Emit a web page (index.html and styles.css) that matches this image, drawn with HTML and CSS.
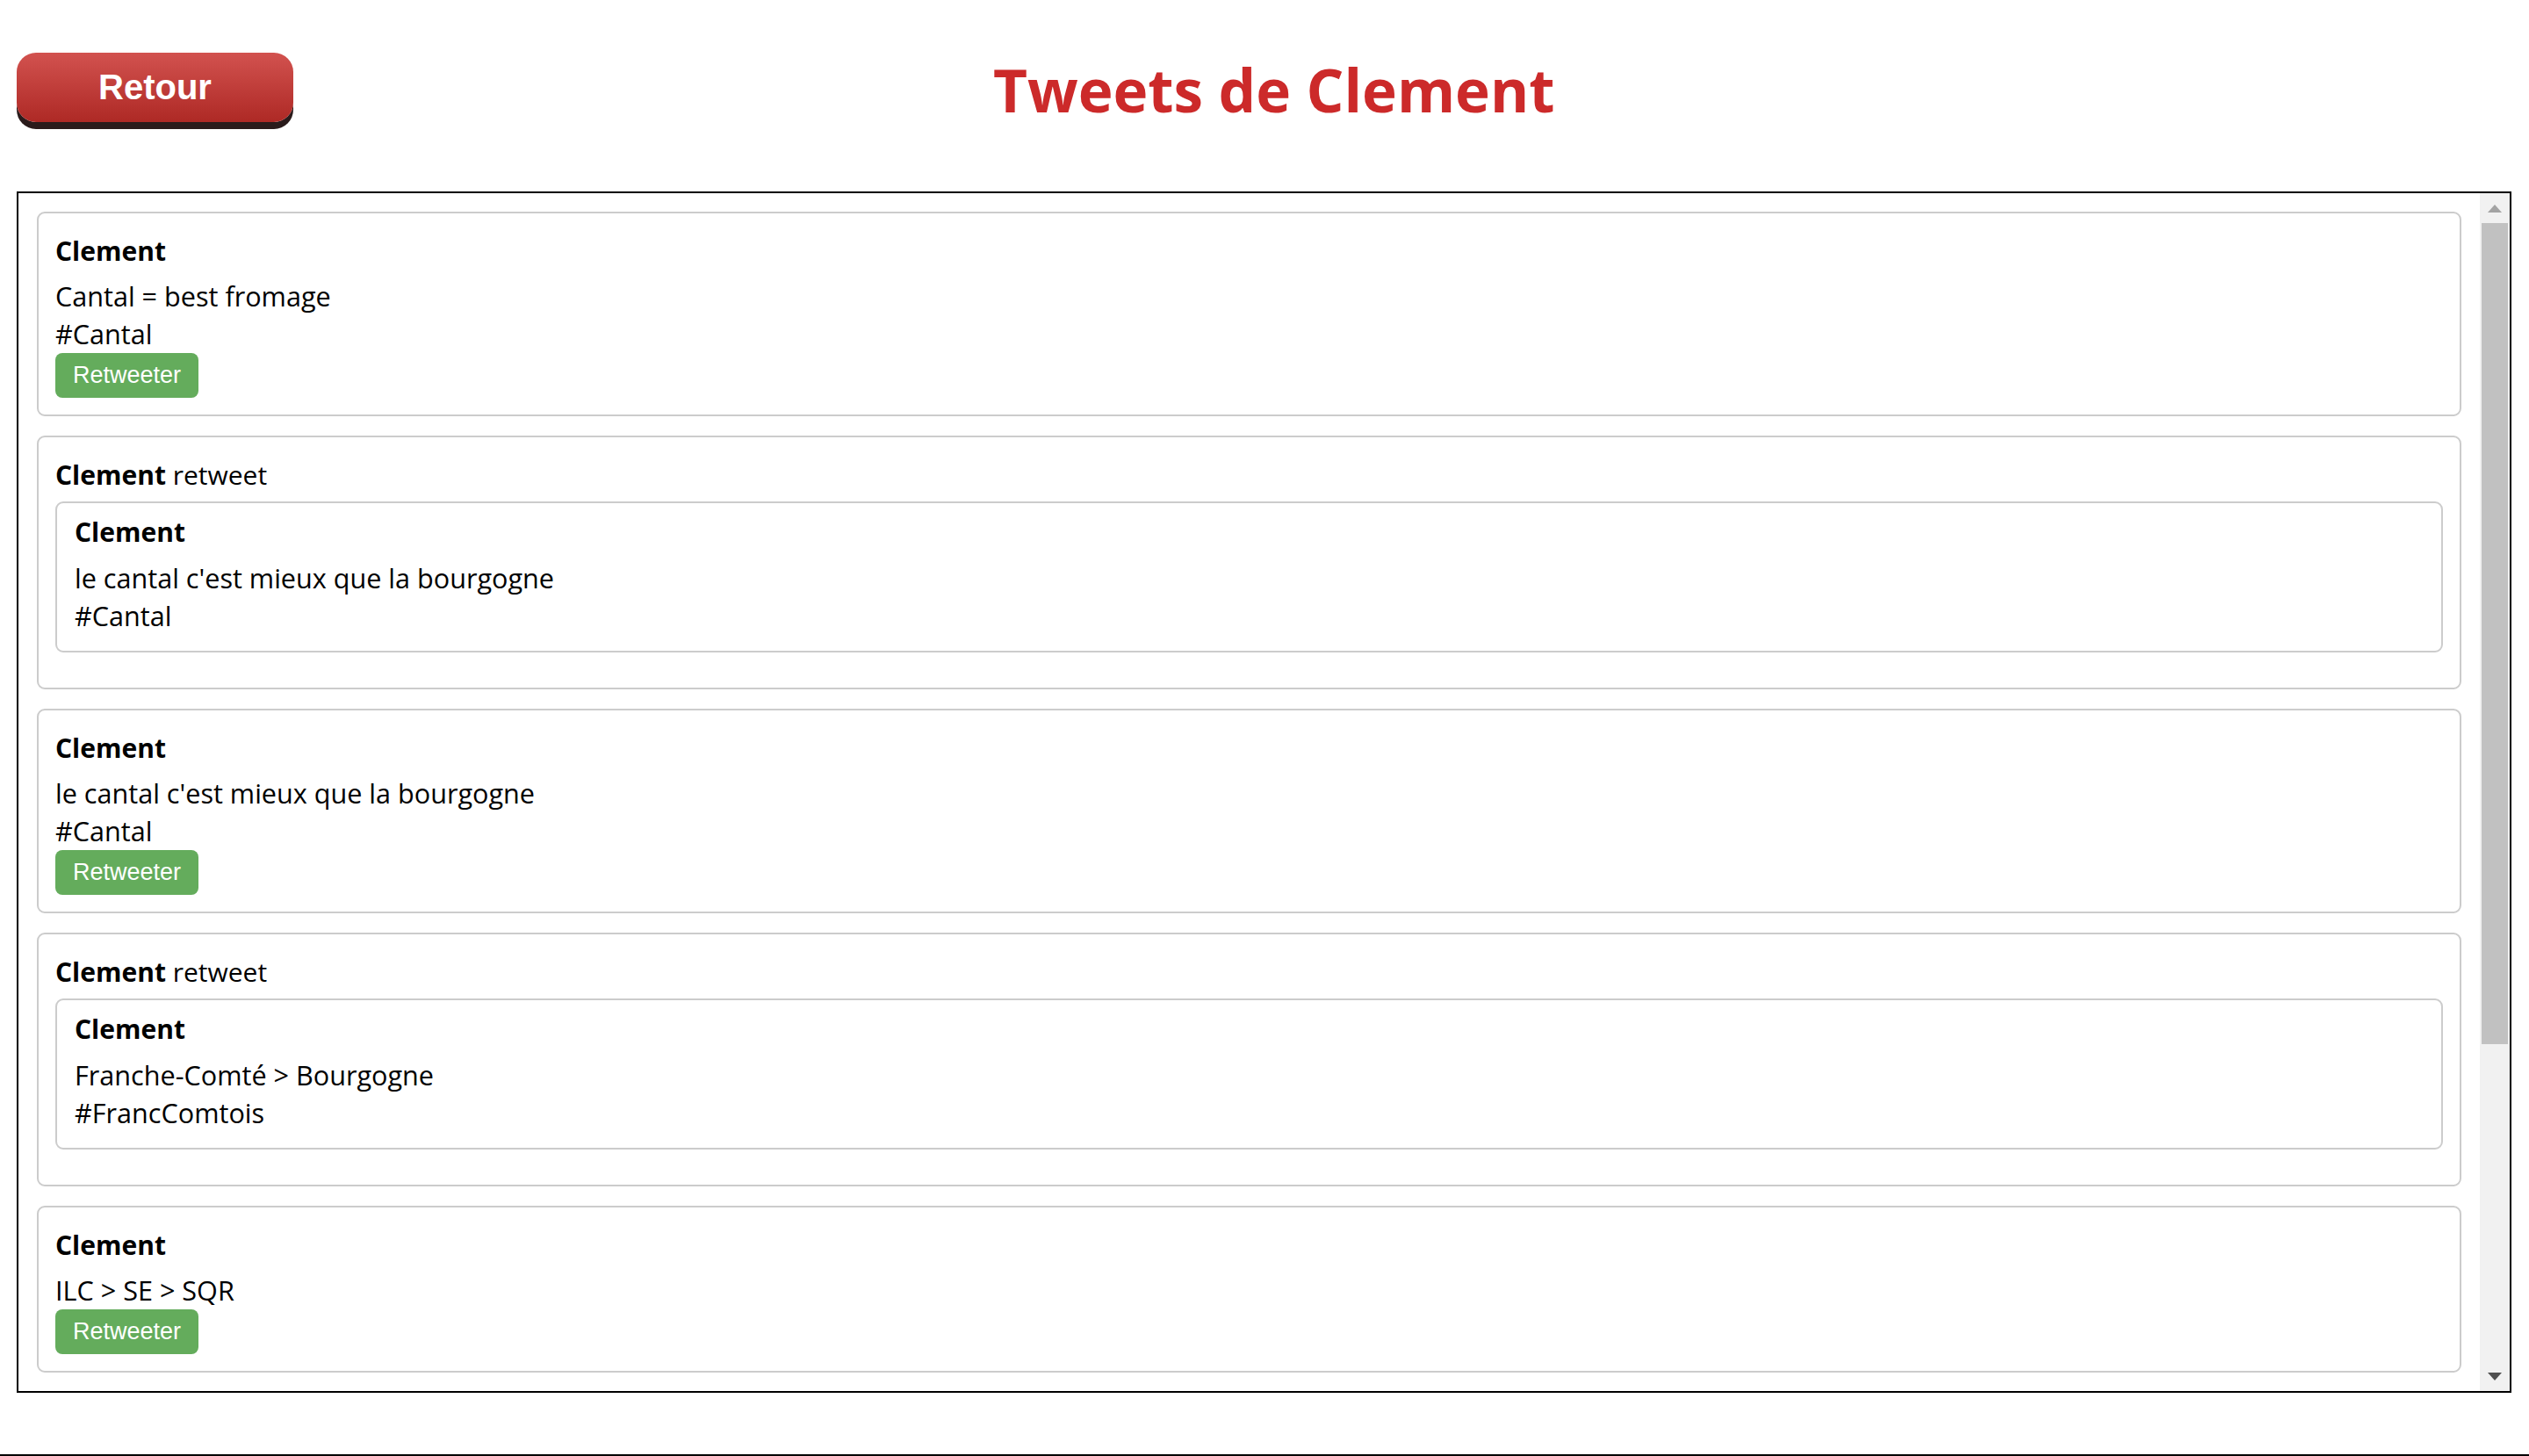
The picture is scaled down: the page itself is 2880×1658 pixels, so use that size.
FILE: index.html
```html
<!DOCTYPE html>
<html lang="fr">
<head>
<meta charset="utf-8">
<title>Tweets de Clement</title>
<link rel="stylesheet" href="styles.css">
</head>
<body>
<div class="page">
  <header class="top">
    <button class="back">Retour</button>
    <h1 class="title">Tweets de Clement</h1>
  </header>
  <div class="feed">
    <div class="feed-list">
      <article class="tweet">
        <div class="author"><strong>Clement</strong></div>
        <div class="text">Cantal = best fromage<br>#Cantal</div>
        <button class="rt">Retweeter</button>
      </article>
      <article class="tweet">
        <div class="author"><strong>Clement</strong> retweet</div>
        <div class="quoted">
          <div class="author"><strong>Clement</strong></div>
          <div class="text">le cantal c'est mieux que la bourgogne<br>#Cantal</div>
        </div>
      </article>
      <article class="tweet">
        <div class="author"><strong>Clement</strong></div>
        <div class="text">le cantal c'est mieux que la bourgogne<br>#Cantal</div>
        <button class="rt">Retweeter</button>
      </article>
      <article class="tweet">
        <div class="author"><strong>Clement</strong> retweet</div>
        <div class="quoted">
          <div class="author"><strong>Clement</strong></div>
          <div class="text">Franche-Comté &gt; Bourgogne<br>#FrancComtois</div>
        </div>
      </article>
      <article class="tweet">
        <div class="author"><strong>Clement</strong></div>
        <div class="text">ILC &gt; SE &gt; SQR</div>
        <button class="rt">Retweeter</button>
      </article>
      <article class="tweet tweet-next"></article>
    </div>
    <div class="scrollbar">
      <div class="sb-btn"><span class="tri-up"></span></div>
      <div class="sb-track"><div class="sb-thumb"></div></div>
      <div class="sb-btn"><span class="tri-down"></span></div>
    </div>
  </div>
</div>
<footer class="foot"></footer>
</body>
</html>
```
FILE: styles.css
```css
html, body {
  margin: 0;
  padding: 0;
  background: #fff;
}

body {
  font-family: "Open Sans", "Noto Sans", sans-serif;
  color: #000;
}

.page {
  padding-left: 19px;
}

.top {
  display: flex;
  align-items: flex-start;
  height: 218px;
  box-sizing: border-box;
  padding-top: 60px;
}

.back {
  width: 315px;
  height: 79px;
  border: none;
  border-radius: 22px;
  background: linear-gradient(#d2524f, #ae2925);
  box-shadow: 0 8px 0 #2a1b1b;
  color: #fff;
  font: 700 40px "Liberation Sans", Arial, sans-serif;
  padding: 0;
  flex: none;
}

.title {
  margin: 9px 0 0 797px;
  font: 700 67.4px/1 "Open Sans", sans-serif;
  color: #cc2a2a;
  white-space: nowrap;
}

.feed {
  display: flex;
  width: 2841px;
  height: 1368px;
  box-sizing: border-box;
  border: 2px solid #000;
}

.feed-list {
  flex: 1;
  overflow: hidden;
  padding: 21px 21px 0;
}

.tweet {
  border: 2px solid #ccc;
  border-radius: 9px;
  padding: 21px 19px 19px;
  margin-bottom: 22px;
  font-size: 30px;
  line-height: 43px;
}

.tweet-next {
  height: 150px;
}

.author {
  margin-bottom: 9px;
}

.author strong {
  font-weight: 700;
}

.text {
  font-size: 30.6px;
}

.quoted {
  border: 2px solid #ccc;
  border-radius: 9px;
  padding: 11px 20px 18px;
  margin: 9px 0 21px;
}

.quoted .author {
  margin-bottom: 10px;
}

.rt {
  display: block;
  height: 51px;
  padding: 0 20px;
  border: none;
  border-radius: 8px;
  background: #64ac5c;
  color: #fff;
  font: 27px/51px "Liberation Sans", Arial, sans-serif;
}

.scrollbar {
  width: 34px;
  flex: none;
  display: flex;
  flex-direction: column;
  background: #f1f1f1;
}

.sb-btn {
  height: 34px;
  display: flex;
  align-items: center;
  justify-content: center;
}

.tri-up {
  width: 0;
  height: 0;
  border-left: 8px solid transparent;
  border-right: 8px solid transparent;
  border-bottom: 9px solid #a3a3a3;
}

.tri-down {
  width: 0;
  height: 0;
  border-left: 8px solid transparent;
  border-right: 8px solid transparent;
  border-top: 9px solid #505050;
}

.sb-track {
  flex: 1;
  padding: 0 2px;
}

.sb-thumb {
  height: 935px;
  background: #c1c1c1;
}

.foot {
  margin-top: 70px;
  border-top: 2px solid #000;
}
```
